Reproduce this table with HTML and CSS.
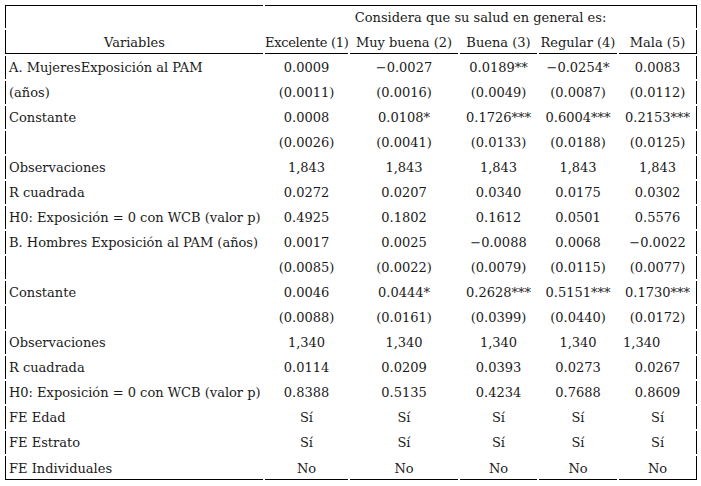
FILE: index.html
```html
<!DOCTYPE html>
<html lang="es">
<head>
<meta charset="utf-8">
<title>Tabla</title>
<link rel="stylesheet" href="styles.css">
</head>
<body>
<table class="tbl">
  <colgroup>
    <col class="c-var"><col class="c1"><col class="c2"><col class="c3"><col class="c4"><col class="c5">
  </colgroup>
  <thead>
    <tr class="h1">
      <th class="first top"></th>
      <th class="top last title" colspan="5">Considera que su salud en general es:</th>
    </tr>
    <tr class="h2">
      <th class="first bottom">Variables</th>
      <th class="bottom tight">Excelente (1)</th>
      <th class="bottom">Muy buena (2)</th>
      <th class="bottom">Buena (3)</th>
      <th class="bottom">Regular (4)</th>
      <th class="bottom last">Mala (5)</th>
    </tr>
  </thead>
  <tbody>
    <tr><td class="first">A. MujeresExposición al PAM</td><td>0.0009</td><td>−0.0027</td><td>0.0189**</td><td>−0.0254*</td><td class="last">0.0083</td></tr>
    <tr><td class="first">(años)</td><td>(0.0011)</td><td>(0.0016)</td><td>(0.0049)</td><td>(0.0087)</td><td class="last">(0.0112)</td></tr>
    <tr><td class="first">Constante</td><td>0.0008</td><td>0.0108*</td><td>0.1726***</td><td>0.6004***</td><td class="last">0.2153***</td></tr>
    <tr><td class="first"></td><td>(0.0026)</td><td>(0.0041)</td><td>(0.0133)</td><td>(0.0188)</td><td class="last">(0.0125)</td></tr>
    <tr><td class="first">Observaciones</td><td>1,843</td><td>1,843</td><td>1,843</td><td>1,843</td><td class="last">1,843</td></tr>
    <tr><td class="first">R cuadrada</td><td>0.0272</td><td>0.0207</td><td>0.0340</td><td>0.0175</td><td class="last">0.0302</td></tr>
    <tr><td class="first">H0: Exposición = 0 con WCB (valor p)</td><td>0.4925</td><td>0.1802</td><td>0.1612</td><td>0.0501</td><td class="last">0.5576</td></tr>
    <tr><td class="first">B. Hombres Exposición al PAM (años)</td><td>0.0017</td><td>0.0025</td><td>−0.0088</td><td>0.0068</td><td class="last">−0.0022</td></tr>
    <tr><td class="first"></td><td>(0.0085)</td><td>(0.0022)</td><td>(0.0079)</td><td>(0.0115)</td><td class="last">(0.0077)</td></tr>
    <tr><td class="first">Constante</td><td>0.0046</td><td>0.0444*</td><td>0.2628***</td><td>0.5151***</td><td class="last">0.1730***</td></tr>
    <tr><td class="first"></td><td>(0.0088)</td><td>(0.0161)</td><td>(0.0399)</td><td>(0.0440)</td><td class="last">(0.0172)</td></tr>
    <tr><td class="first">Observaciones</td><td>1,340</td><td>1,340</td><td>1,340</td><td>1,340</td><td class="last left">1,340</td></tr>
    <tr><td class="first">R cuadrada</td><td>0.0114</td><td>0.0209</td><td>0.0393</td><td>0.0273</td><td class="last">0.0267</td></tr>
    <tr><td class="first">H0: Exposición = 0 con WCB (valor p)</td><td>0.8388</td><td>0.5135</td><td>0.4234</td><td>0.7688</td><td class="last">0.8609</td></tr>
    <tr><td class="first">FE Edad</td><td>Sí</td><td>Sí</td><td>Sí</td><td>Sí</td><td class="last">Sí</td></tr>
    <tr><td class="first">FE Estrato</td><td>Sí</td><td>Sí</td><td>Sí</td><td>Sí</td><td class="last">Sí</td></tr>
    <tr class="end"><td class="first">FE Individuales</td><td>No</td><td>No</td><td>No</td><td>No</td><td class="last">No</td></tr>
  </tbody>
</table>
</body>
</html>
```
FILE: styles.css
```css
html, body {
  margin: 0;
  padding: 0;
  background: #ffffff;
}

.tbl {
  margin: 3px 0 0 3px;
  border-collapse: separate;
  border-spacing: 2px;
  table-layout: fixed;
  width: 696px;
  font-family: "DejaVu Serif", "Liberation Serif", serif;
  font-size: 13px;
  color: #1a1a1a;
}

.c-var { width: 258px; }
.c1 { width: 83px; }
.c2 { width: 108px; }
.c3 { width: 77px; }
.c4 { width: 78px; }
.c5 { width: 78px; }

.tbl th,
.tbl td {
  height: 23px;
  padding: 0 1px;
  box-sizing: border-box;
  font-weight: normal;
  text-align: center;
  vertical-align: middle;
  white-space: nowrap;
}

.tbl .h2 th {
  height: 24px;
  padding-top: 2px;
}

.tbl .h2 th.tight {
  padding: 2px 0 0;
  letter-spacing: -0.3px;
}

.tbl td.first {
  text-align: left;
  padding-left: 3px;
}

.tbl .end td {
  height: 24px;
  padding-top: 2px;
}

.tbl .first { border-left: 1px solid #000; }
.tbl .last { border-right: 1px solid #000; }
.tbl .top { border-top: 1px solid #000; }
.tbl .bottom { border-bottom: 1px solid #000; }
.tbl .end td { border-bottom: 1px solid #000; }

.tbl td.left {
  text-align: left;
  padding-left: 4px;
}
```
